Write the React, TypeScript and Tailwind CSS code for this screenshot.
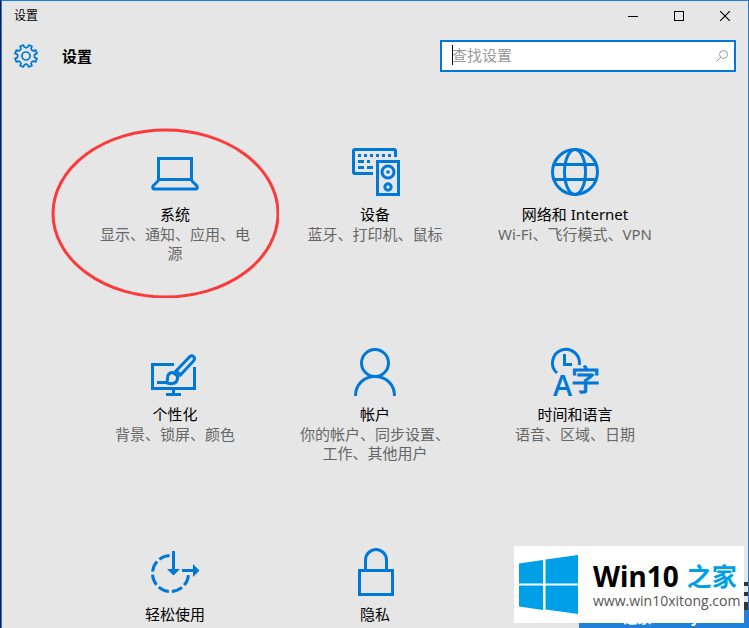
import type { ReactNode } from "react";

type Tile = {
    name: string;
    description?: string;
    icon: ReactNode;
    circled?: boolean;
};

const point = (radius: number, degrees: number) => {
    const angle = (degrees * Math.PI) / 180;
    return `${(12 + radius * Math.sin(angle)).toFixed(2)} ${(12 - radius * Math.cos(angle)).toFixed(2)}`;
};

// Eight teeth, with a rounded valley between each pair
const gearPath =
    Array.from({ length: 8 }, (_, i) => {
        const mid = i * 45 + 22.5;
        const start = i === 0 ? "M" : "L";
        return `${start}${point(9, mid - 12)} L${point(11.3, mid - 9)} L${point(11.3, mid + 9)} L${point(9, mid + 12)} Q${point(7.6, mid + 22.5)} ${point(9, mid + 33)}`;
    }).join(" ") + "Z";

const GearIcon = () => (
    <svg viewBox="0 0 24 24" className="size-6 fill-none stroke-[#0078d7]" strokeWidth="1.7" strokeLinejoin="round">
        <path d={gearPath} />
        <circle cx="12" cy="12" r="4" />
    </svg>
);

const TileIcon = ({ children, viewBox = "0 0 48 48" }: { children: ReactNode; viewBox?: string }) => (
    <svg viewBox={viewBox} className="size-12 overflow-visible fill-none stroke-[#0078d7]" strokeWidth="3" aria-hidden="true">
        {children}
    </svg>
);

const LaptopIcon = () => (
    <TileIcon>
        <rect x="7.5" y="10.5" width="33" height="21" />
        <path d="M7.5 32.5 2 38q-1 3 1.500 3h41q2.500 0 1.500-3l-5.500-5.500" strokeLinejoin="round" />
    </TileIcon>
);

const DevicesIcon = () => (
    <TileIcon viewBox="-1 0 48 48">
        <path d="M21 25.500H3q-1.500 0-1.500-1.500V3q0-1.500 1.500-1.500h39q1.500 0 1.500 1.500v6" />
        <path d="M6 7.500h36" strokeDasharray="3 3" />
        <path d="M6 13.500h6m3 0h3M6 19.500h6m3 0h6" />
        <rect x="25.500" y="13.500" width="21" height="33" />
        <circle cx="36" cy="24" r="6" />
        <circle cx="36" cy="24" r="1.800" className="fill-[#0078d7]" strokeWidth="0" />
        <circle cx="36" cy="39" r="3.200" />
    </TileIcon>
);

const GlobeIcon = () => (
    <TileIcon>
        <circle cx="24" cy="24" r="22.500" />
        <ellipse cx="24" cy="24" rx="10.500" ry="22.500" />
        <path d="M3 16.500h42M3 31.500h42" />
    </TileIcon>
);

const PersonalizeIcon = () => (
    <TileIcon>
        <path d="M23 16.500H1.500v24h42V19" />
        <path d="M22.500 42v4.500M15 46.500h15" />
        <path d="M24 24 37 10.500q3-4 5.500-2t-.500 5L28.500 28" />
        <path d="m22.500 25 5.500 4.500m-3-7 5.500 5" strokeWidth="2.500" />
        <path d="M6 34.500h8.500q2 0 2-4 0-6 5-6 5.500.500 5 6-.500 4.500-5 5-4 .500-6.500-1" />
    </TileIcon>
);

const AccountIcon = () => (
    <TileIcon>
        <circle cx="24" cy="15" r="13.500" />
        <path d="M4.500 48C4.500 36.500 13 28.500 24 28.500S43.500 36.500 43.500 48" />
    </TileIcon>
);

const TimeLanguageIcon = () => (
    <TileIcon>
        <path d="M6 25A13.500 13.500 0 1 1 28.300 17" />
        <path d="M13.500 6v10.500H21" />
        <text x="2" y="48" className="fill-[#0078d7] stroke-none font-['Open_Sans'] text-[29px] font-semibold">
            A
        </text>
        <text x="20" y="43" className="fill-[#0078d7] stroke-[#0078d7] stroke-1 font-['Noto_Sans_CJK_SC'] text-[29px]">
            字
        </text>
    </TileIcon>
);

const EaseOfAccessIcon = () => (
    <TileIcon>
        <path d="M37.500 25.500A18 18 0 1 1 19.500 7.500" strokeDasharray="11 3.140" strokeDashoffset="-1.570" />
        <path d="M22.500 3v19M31 22.500h12" />
        <path d="M16 21h13l-6.500 6.500zM42 16v13l6.500-6.500z" className="fill-[#0078d7] stroke-none" />
    </TileIcon>
);

const LockIcon = () => (
    <TileIcon>
        <rect x="8.500" y="22.500" width="33" height="24" />
        <path d="M14.500 22V12a10.500 10.500 0 0 1 21 0v10" />
    </TileIcon>
);

const tiles: Tile[] = [
    { name: "系统", description: "显示、通知、应用、电源", icon: <LaptopIcon />, circled: true },
    { name: "设备", description: "蓝牙、打印机、鼠标", icon: <DevicesIcon /> },
    { name: "网络和 Internet", description: "Wi-Fi、飞行模式、VPN", icon: <GlobeIcon /> },
    { name: "个性化", description: "背景、锁屏、颜色", icon: <PersonalizeIcon /> },
    { name: "帐户", description: "你的帐户、同步设置、工作、其他用户", icon: <AccountIcon /> },
    { name: "时间和语言", description: "语音、区域、日期", icon: <TimeLanguageIcon /> },
    { name: "轻松使用", icon: <EaseOfAccessIcon /> },
    { name: "隐私", icon: <LockIcon /> },
];

const TitleBar = () => (
    <div className="flex h-[30px] items-center justify-between pl-3">
        <span className="text-xs">设置</span>
        <div className="flex h-full">
            <button type="button" aria-label="最小化" className="flex w-[46px] items-center justify-center">
                <svg viewBox="0 0 10 10" className="size-2.5 stroke-black" shapeRendering="crispEdges">
                    <path d="M0 5.500h10" />
                </svg>
            </button>
            <button type="button" aria-label="最大化" className="flex w-[46px] items-center justify-center">
                <svg viewBox="0 0 10 10" className="size-2.5 fill-none stroke-black" shapeRendering="crispEdges">
                    <rect x="0.500" y="0.500" width="9" height="9" />
                </svg>
            </button>
            <button type="button" aria-label="关闭" className="flex w-[46px] items-center justify-center">
                <svg viewBox="0 0 10 10" className="size-2.5 stroke-black" strokeWidth="1.200">
                    <path d="m0 0 10 10M10 0 0 10" />
                </svg>
            </button>
        </div>
    </div>
);

const SearchBox = () => (
    <div className="relative flex h-8 w-[296px] items-center border-2 border-[#0078d7] bg-white pr-1.5 pl-2.5">
        <input
            type="text"
            aria-label="查找设置"
            placeholder="查找设置"
            className="min-w-0 flex-1 pb-0.5 text-[15px] outline-none placeholder:text-[#999999]"
        />
        <span className="absolute top-[3px] left-2.5 h-5 w-px bg-black" />
        <svg viewBox="0 0 12 12" className="size-3 fill-none stroke-[#999999]">
            <circle cx="7.500" cy="4.500" r="4" />
            <path d="M4.700 7.300.500 11.500" />
        </svg>
    </div>
);

const SettingsTile = ({ name, description, icon, circled }: Tile) => (
    <a href="#" className="relative flex h-[200px] flex-col items-center px-5 text-center text-[15px]">
        {icon}
        <span className="mt-2 mb-px leading-5 text-black">{name}</span>
        {description && <span className="leading-[19px] text-[#666666]">{description}</span>}
        {circled && (
            <svg viewBox="0 0 228 170" className="absolute -top-5 -left-6 h-[170px] w-[228px] fill-none stroke-[#fb3b3b]" strokeWidth="3">
                <ellipse cx="114.500" cy="85.500" rx="112.500" ry="83.500" />
            </svg>
        )}
    </a>
);

const Watermark = () => (
    <>
        <div className="absolute right-0 bottom-0 flex w-[169px] justify-center bg-[#1e82dc] text-sm leading-5 font-bold whitespace-nowrap text-white">
            W10之家 W10ZJ.COM
        </div>
        <div className="absolute right-0 bottom-[18px] flex w-1 flex-col gap-1.5">
            <span className="h-1 bg-[#333333]" />
            <span className="h-1 bg-[#333333]" />
            <span className="h-2 bg-[#333333]" />
        </div>
        <a href="#" className="absolute right-1 bottom-[5px] flex h-[77px] w-[230px] items-center gap-[15px] bg-white pl-[5px]">
            <svg viewBox="0 0 59 59" className="size-[59px] fill-[#00a0e9]" aria-hidden="true">
                <path d="M0 8.500 24 5v23.500H0zM26.500 4.600 59 0v28.500H26.500zM0 30.500h24V55L0 51.500zM26.500 30.500H59V59l-32.500-4.500z" />
            </svg>
            <span className="flex flex-col whitespace-nowrap">
                <span className="flex items-center gap-2 leading-8">
                    <span className="font-['Noto_Sans'] text-[28px] font-bold text-black">Win10</span>
                    <span className="text-[25px] font-bold text-[#00a0e9]">之家</span>
                </span>
                <span className="font-['Open_Sans'] text-sm leading-[18px] text-[#555555]">www.win10xitong.com</span>
            </span>
        </a>
    </>
);

export default function App() {
    return (
        <div className="h-screen overflow-hidden bg-[#061a38] pl-px font-['Noto_Sans','Noto_Sans_CJK_SC',sans-serif] text-black">
            <div className="relative h-full overflow-hidden border border-b-0 border-[#1a80d9] bg-[#e6e6e6]">
                <TitleBar />
                <header className="mt-[9px] flex items-center justify-between pr-3 pl-3">
                    <div className="flex items-center gap-6">
                        <GearIcon />
                        <h1 className="text-[15px] font-bold">设置</h1>
                    </div>
                    <SearchBox />
                </header>
                <main className="mx-auto mt-[76px] grid max-w-[600px] grid-cols-3">
                    {tiles.map((tile) => (
                        <SettingsTile key={tile.name} {...tile} />
                    ))}
                </main>
                <Watermark />
            </div>
        </div>
    );
}
